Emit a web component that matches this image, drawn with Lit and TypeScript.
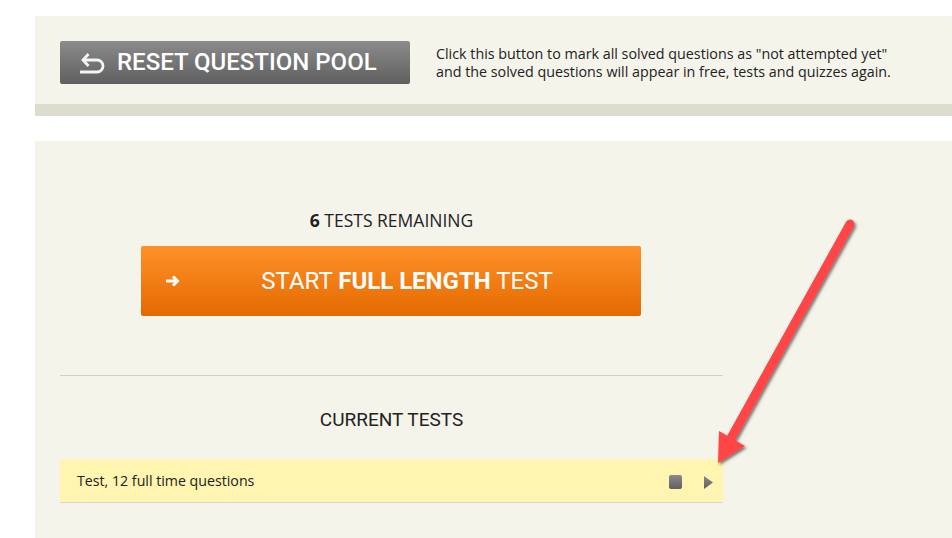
import { LitElement, html, css } from "lit";
import { customElement } from "lit/decorators.js";

@customElement("app-root")
export class AppRoot extends LitElement {
  static styles = css`
    :host { display: block; width: 952px; height: 538px; background: #fff; overflow: hidden; position: relative; font-family: "Open Sans", sans-serif; color: #222; }
    .page { padding: 16px 0 0 35px; box-sizing: border-box; height: 538px; display: flex; flex-direction: column; }
    .top { height: 88px; background: #f5f4eb; border-bottom: 12px solid #dddcce; display: flex; align-items: center; padding: 0 0 0 25px; gap: 26px; flex: none; box-sizing: content-box; }
    .reset { width: 350px; height: 43px; box-sizing: border-box; margin-top: 5px; border-radius: 2px; background: linear-gradient(#8b8b8b, #5f5f5f); color: #fff; display: flex; align-items: center; padding-left: 20px; gap: 12px; font: 500 24px Roboto, sans-serif; white-space: nowrap; }
    .reset svg { flex: none; }
    .reset span { margin-top: -2px; }
    .desc { font-size: 14.3px; line-height: 18px; margin-top: 5px; white-space: nowrap; color: #222; }
    .main { margin-top: 25px; flex: 1; background: #f5f4eb; padding: 0 0 0 25px; }
    .col { width: 663px; display: flex; flex-direction: column; }
    .remain { margin-top: 68px; height: 22px; line-height: 22px; font-size: 17.5px; text-align: center; }
    .remain b { font-weight: 700; }
    .start { margin: 15px 0 0 81px; width: 500px; height: 70px; border-radius: 2px; background: linear-gradient(#ff9029, #e46a00); color: #fff; display: flex; align-items: center; font: 400 24px Roboto, sans-serif; box-sizing: border-box; padding-left: 24px; }
    .start .label { flex: 1; text-align: center; margin-left: -24px; padding-left: 17px; white-space: nowrap; }
    .start b { font-weight: 700; }
    .start svg { flex: none; }
    .rule { margin-top: 59px; height: 1px; background: #d2d1c9; }
    .current { margin-top: 33px; text-align: center; font: 400 19px/22px Roboto, sans-serif; height: 22px; }
    .row { margin-top: 28px; height: 44px; box-sizing: border-box; background: #fff4b0; border-bottom: 1px solid #d9d8cc; display: flex; align-items: center; padding: 0 10px 0 17px; font-size: 14.2px; }
    .row .name { flex: 1; }
    .row svg { flex: none; margin-top: 3px; }
    .row .stop { margin-right: 22px; }
    .arrow { position: absolute; left: 0; top: 0; pointer-events: none; }
  `;

  render() {
    return html`
      <div class="page">
        <section class="top">
          <div class="reset">
            <svg width="25" height="24" viewBox="0 0 25 24" fill="none" stroke="#f4f4f4" stroke-width="2.8"><path d="M8.5 3 3 9l5.5 6"/><path d="M3 9h14a6 6 0 0 1 0 12H0"/></svg>
            <span>RESET QUESTION POOL</span>
          </div>
          <div class="desc">Click this button to mark all solved questions as "not attempted yet"<br>and the solved questions will appear in free, tests and quizzes again.</div>
        </section>
        <section class="main">
          <div class="col">
            <div class="remain"><b>6</b> TESTS REMAINING</div>
            <div class="start">
              <svg width="15" height="12" viewBox="0 0 15 12" fill="none" stroke="#fff" stroke-width="3"><path d="M1 6h11"/><path d="M8 1.5 12.5 6 8 10.5"/></svg>
              <span class="label">START <b>FULL LENGTH</b> TEST</span>
            </div>
            <div class="rule"></div>
            <div class="current">CURRENT TESTS</div>
            <div class="row">
              <span class="name">Test, 12 full time questions</span>
              <svg class="stop" width="13" height="14" viewBox="0 0 13 14"><defs><linearGradient id="g" x1="0" y1="0" x2="0" y2="1"><stop offset="0" stop-color="#8b8b8b"/><stop offset="1" stop-color="#5f5f5f"/></linearGradient></defs><rect width="13" height="14" rx="2" fill="url(#g)"/></svg>
              <svg width="9" height="13" viewBox="0 0 9 13"><path d="M0 0 9 6.5 0 13Z" fill="url(#g)"/></svg>
            </div>
          </div>
        </section>
      </div>
      <svg class="arrow" width="952" height="538" viewBox="0 0 952 538">
        <defs><filter id="s" x="-30%" y="-30%" width="160%" height="160%"><feDropShadow dx="1.5" dy="2" stdDeviation="1.8" flood-color="#000" flood-opacity="0.55"/></filter></defs>
        <g filter="url(#s)">
          <path d="M850 224 730 440" stroke="#ff4444" stroke-width="9" stroke-linecap="round" fill="none"/>
          <path d="M718 463 719 431 745 446Z" fill="#ff4444"/>
        </g>
      </svg>
    `;
  }
}
